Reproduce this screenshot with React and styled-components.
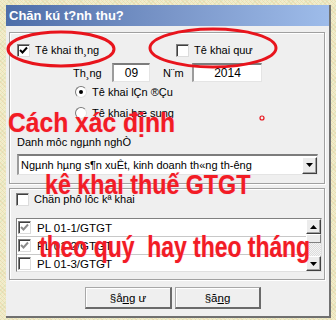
import styled, { createGlobalStyle } from "styled-components";

const GlobalStyle = createGlobalStyle`
  html, body {
    margin: 0;
    padding: 0;
  }
  body {
    width: 336px;
    height: 320px;
    overflow: hidden;
    background-color: #f2ecca;
    background-image:
      repeating-linear-gradient(45deg, rgba(230, 200, 150, 0.35) 0 1px, transparent 1px 3px),
      repeating-linear-gradient(-45deg, rgba(200, 225, 180, 0.35) 0 1px, transparent 1px 3px);
    font-family: "Liberation Sans", Arial, sans-serif;
    font-size: 11px;
    color: #000;
  }
`;

const Page = styled.div`
  position: relative;
  width: 336px;
  height: 320px;
  padding-top: 5px;
  padding-left: 6px;
  box-sizing: border-box;
  overflow: hidden;
`;

const Dialog = styled.div`
  width: 323px;
  height: 311px;
  background: #efefef;
  border-right: 2px solid #707070;
  border-bottom: 2px solid #707070;
  display: flex;
  flex-direction: column;
`;

const TitleBar = styled.div`
  height: 21px;
  display: flex;
  align-items: center;
  padding-left: 3px;
  background: linear-gradient(90deg, #4e6ea9 0%, #7995c8 50%, #9ebcea 100%);
  color: #fff;
  font-weight: bold;
  font-size: 13px;
`;

const Body = styled.div`
  display: flex;
  flex-direction: column;
  padding: 6px 4px 0 3px;
  gap: 4px;
`;

const GroupBox = styled.div`
  height: ${(p) => p.$h}px;
  box-sizing: border-box;
  border: 1px solid #a0a0a0;
  box-shadow: inset 1px 1px 0 #fff, 1px 1px 0 #fff;
  display: flex;
  flex-direction: column;
  padding: ${(p) => p.$pad};
`;

const Row = styled.div`
  display: flex;
  align-items: center;
  flex: none;
  height: ${(p) => p.$h || 16}px;
  margin-top: ${(p) => p.$mt || 0}px;
  margin-left: ${(p) => p.$ml || 0}px;
`;

const CheckItem = styled.label`
  display: flex;
  align-items: center;
  gap: 5px;
  width: ${(p) => (p.$w ? `${p.$w}px` : "auto")};
  white-space: nowrap;
`;

const Box = styled.span`
  width: 11px;
  height: 11px;
  flex: none;
  background: #fff;
  border-top: 1px solid #808080;
  border-left: 1px solid #808080;
  border-right: 1px solid #dcdcdc;
  border-bottom: 1px solid #dcdcdc;
  box-shadow: inset 1px 1px 0 #404040;
  display: flex;
  align-items: center;
  justify-content: center;
`;

const Radio = styled.span`
  width: 12px;
  height: 12px;
  flex: none;
  border-radius: 50%;
  background: #fff;
  border: 1px solid;
  border-color: #7a7a7a #e0e0e0 #e0e0e0 #7a7a7a;
  box-sizing: border-box;
  display: flex;
  align-items: center;
  justify-content: center;
  &::after {
    content: "";
    width: 4px;
    height: 4px;
    border-radius: 50%;
    background: ${(p) => (p.$on ? "#000" : "transparent")};
  }
`;

const FieldLabel = styled.span`
  width: ${(p) => p.$w}px;
  flex: none;
`;

const TextBox = styled.div`
  width: ${(p) => p.$w}px;
  height: 19px;
  box-sizing: border-box;
  background: #fff;
  border-top: 2px solid #7c7c7c;
  border-left: 2px solid #9c9c9c;
  border-right: 1px solid #e4e4e4;
  border-bottom: 1px solid #e4e4e4;
  display: flex;
  align-items: center;
  justify-content: center;
  font-size: 12px;
  margin-right: 13px;
`;

const Select = styled.div`
  width: 301px;
  height: 21px;
  box-sizing: border-box;
  background: #fff;
  border-top: 2px solid #7c7c7c;
  border-left: 2px solid #9c9c9c;
  border-right: 1px solid #e4e4e4;
  border-bottom: 1px solid #e4e4e4;
  display: flex;
  align-items: center;
  padding-left: 2px;
  font-size: 11px;
`;

const SelectText = styled.span`
  flex: 1;
  white-space: nowrap;
  overflow: hidden;
`;

const ArrowButton = styled.span`
  width: 15px;
  height: ${(p) => p.$h || 16}px;
  box-sizing: border-box;
  background: #ececec;
  border-top: 1px solid #fff;
  border-left: 1px solid #fff;
  border-right: 1px solid #404040;
  border-bottom: 1px solid #404040;
  box-shadow: inset -1px -1px 0 #a0a0a0;
  display: flex;
  align-items: center;
  justify-content: center;
  flex: none;
`;

const List = styled.div`
  margin-top: 11px;
  width: 306px;
  height: 54px;
  flex: none;
  box-sizing: border-box;
  background: #fff;
  border: 1px solid #808080;
  border-right-color: #e0e0e0;
  border-bottom-color: #e0e0e0;
  display: flex;
  overflow: hidden;
`;

const ListRows = styled.div`
  flex: 1;
  display: flex;
  flex-direction: column;
`;

const ListRow = styled.div`
  height: 17px;
  flex: none;
  display: flex;
  align-items: center;
  gap: 6px;
  border-bottom: 1px solid #c8c8c8;
  padding-left: 1px;
  font-size: 11.5px;
  &:last-child {
    border-bottom: none;
  }
`;

const ScrollBar = styled.div`
  width: 15px;
  display: flex;
  flex-direction: column;
  background: repeating-conic-gradient(#f4f4f4 0 25%, #dcdcdc 0 50%) 0 0 / 2px 2px;
`;

const Thumb = styled.span`
  height: 9px;
  box-sizing: border-box;
  background: #ececec;
  border: 1px solid;
  border-color: #fff #808080 #808080 #fff;
`;

const Spacer = styled.span`
  flex: 1;
`;

const ButtonRow = styled.div`
  display: flex;
  gap: 3px;
  padding-left: 76px;
  margin-top: 3px;
`;

const Button = styled.div`
  width: ${(p) => p.$w}px;
  height: 22px;
  box-sizing: border-box;
  background: #efefef;
  border-top: 1px solid #a8a8a8;
  border-left: 1px solid #a8a8a8;
  border-right: 2px solid #6a6a6a;
  border-bottom: 2px solid #6a6a6a;
  box-shadow: inset 1px 1px 0 #fff;
  display: flex;
  align-items: center;
  justify-content: center;
  font-size: 11.5px;
  u {
    text-decoration: underline;
  }
`;

const Marks = styled.svg`
  position: absolute;
  left: 0;
  top: 0;
  pointer-events: none;
`;

const Note = styled.div`
  position: absolute;
  left: ${(p) => p.$x}px;
  top: ${(p) => p.$y}px;
  font-family: "Liberation Sans", Arial, sans-serif;
  font-weight: bold;
  font-size: ${(p) => p.$size}px;
  transform: scaleX(${(p) => p.$sx || 1});
  transform-origin: left top;
  color: #f21c24;
  white-space: pre;
  line-height: 1;
  text-shadow: 0 0 1px rgba(255, 80, 160, 0.6);
`;

const Check = ({ gray }) => (
  <svg width="9" height="9" viewBox="0 0 9 9">
    <path d="M1 4 L3.5 6.5 L8 1.5" fill="none" stroke={gray ? "#8c8c8c" : "#000"} strokeWidth="2" />
  </svg>
);

const Tri = ({ up }) => (
  <svg width="7" height="4" viewBox="0 0 7 4">
    <path d={up ? "M0 4 L3.5 0 L7 4 Z" : "M0 0 L7 0 L3.5 4 Z"} fill="#000" />
  </svg>
);

const appendices = [
  { name: "PL 01-1/GTGT", on: true },
  { name: "PL 01-2/GTGT", on: true },
  { name: "PL 01-3/GTGT", on: false },
];

export default function App() {
  return (
    <>
      <GlobalStyle />
      <Page>
        <Dialog>
          <TitleBar>Chăn kú t?nh thu?</TitleBar>
          <Body>
            <GroupBox $h={152} $pad="9px 0 0 7px">
              <Row>
                <CheckItem $w={159}>
                  <Box>
                    <Check />
                  </Box>
                  Tê khai th¸ng
                </CheckItem>
                <CheckItem>
                  <Box />
                  Tê khai quư
                </CheckItem>
              </Row>
              <Row $h={19} $mt={5} $ml={56}>
                <FieldLabel $w={39}>Th¸ng</FieldLabel>
                <TextBox $w={38}>09</TextBox>
                <FieldLabel $w={29}>N¨m</FieldLabel>
                <TextBox $w={70}>2014</TextBox>
              </Row>
              <Row $mt={2} $ml={58}>
                <CheckItem>
                  <Radio $on />
                  Tê khai lÇn ®Çu
                </CheckItem>
              </Row>
              <Row $mt={5} $ml={58}>
                <CheckItem>
                  <Radio />
                  Tê khai bæ sung
                </CheckItem>
              </Row>
              <Row $mt={13}>Danh môc ngµnh nghÒ</Row>
              <Row $mt={4} $h={21}>
                <Select>
                  <SelectText>Ngµnh hµng s¶n xuÊt, kinh doanh th«ng th-êng</SelectText>
                  <ArrowButton $h={17}>
                    <Tri />
                  </ArrowButton>
                </Select>
              </Row>
            </GroupBox>
            <GroupBox $h={92} $pad="2px 0 0 6px">
              <Row>
                <CheckItem>
                  <Box />
                  Chän phô lôc kª khai
                </CheckItem>
              </Row>
              <List>
                <ListRows>
                  {appendices.map((a) => (
                    <ListRow key={a.name}>
                      <Box>{a.on && <Check gray />}</Box>
                      {a.name}
                    </ListRow>
                  ))}
                </ListRows>
                <ScrollBar>
                  <ArrowButton $h={15}>
                    <Tri up />
                  </ArrowButton>
                  <Thumb />
                  <Spacer />
                  <ArrowButton $h={15}>
                    <Tri />
                  </ArrowButton>
                </ScrollBar>
              </List>
            </GroupBox>
            <ButtonRow>
              <Button $w={87}>
                §å<u>n</u>g ư
              </Button>
              <Button $w={86}>
                §ă<u>n</u>g
              </Button>
            </ButtonRow>
          </Body>
        </Dialog>

        <Marks width="336" height="320" viewBox="0 0 336 320">
          <ellipse cx="61" cy="49" rx="53" ry="17" fill="none" stroke="#e8141c" strokeWidth="3" />
          <ellipse cx="213" cy="48" rx="63" ry="19" fill="none" stroke="#e8141c" strokeWidth="3" />
          <circle cx="262" cy="118" r="2" fill="none" stroke="#e8141c" strokeWidth="1.2" />
        </Marks>
        <Note $x={8} $y={109} $size={28} $sx={0.88}>
          Cách xác định
        </Note>
        <Note $x={45} $y={171} $size={28} $sx={0.83}>
          kê khai thuế GTGT
        </Note>
        <Note $x={39} $y={233} $size={29} $sx={0.79}>
          {"theo quý  hay theo tháng"}
        </Note>
      </Page>
    </>
  );
}
